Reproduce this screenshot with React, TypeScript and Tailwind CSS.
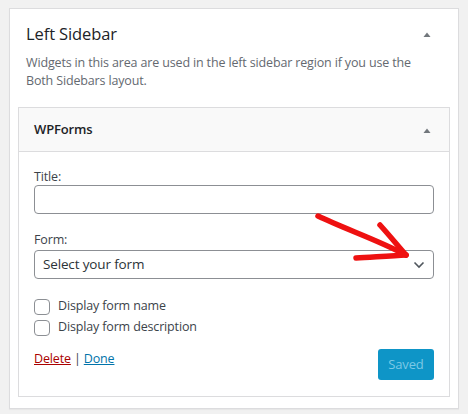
import React from 'react'

const font = { fontFamily: '"Open Sans", "Noto Sans", sans-serif' }

function Caret() {
  return (
    <svg width="10" height="6" viewBox="0 0 10 6" className="shrink-0">
      <path d="M1.5 6 L5 1.5 L8.5 6 Z" fill="#72777c" />
    </svg>
  )
}

function Checkbox({ label }: { label: string }) {
  return (
    <label className="flex h-[21px] items-center gap-[8px]">
      <span className="h-[16px] w-[16px] rounded-[4px] border border-[#8c8f94] bg-white" />
      <span className="text-[12.5px] tracking-[-0.15px] text-[#3c434a]">{label}</span>
    </label>
  )
}

export default function App() {
  return (
    <div className="relative min-h-[414px] w-[468px] bg-[#f1f1f1] pt-[8px] pl-[9px]" style={font}>
      <div className="w-[450px] border border-[#dcdcde] bg-white pb-[11px] shadow-[0_1px_1px_rgba(0,0,0,0.04)]">
        <div className="flex items-center justify-between pl-[16px] pr-[26px] pt-[13px]">
          <h2 className="text-[16.5px] leading-[24px] tracking-[-0.1px] text-[#1d2327]">Left Sidebar</h2>
          <Caret />
        </div>
        <p className="mt-[8px] px-[16px] text-[12.5px] leading-[18px] tracking-[-0.15px] text-[#646970]">
          Widgets in this area are used in the left sidebar region if you use the
          <br />
          Both Sidebars layout.
        </p>

        <div className="mx-[8px] mt-[17px] border border-[#dcdcde]">
          <div className="flex h-[44px] items-center justify-between border-b border-[#dcdcde] bg-[#f9f9f9] pl-[15px] pr-[17px]">
            <span className="text-[13px] font-semibold tracking-[-0.15px] text-[#1d2327]">WPForms</span>
            <Caret />
          </div>

          <div className="px-[15px] pt-[16px] pb-[16px] text-[12.5px] tracking-[-0.15px] text-[#3c434a]">
            <div className="leading-[18px]">Title:</div>
            <div className="mt-[-1px] h-[29px] w-full rounded-[4px] border border-[#8c8f94] bg-white" />

            <div className="mt-[17px] leading-[18px]">Form:</div>
            <div className="mt-[1px] flex h-[29px] w-full items-center justify-between rounded-[4px] border border-[#8c8f94] bg-white pl-[8px] pr-[8px]">
              <span className="text-[13.5px] text-[#2c3338]">Select your form</span>
              <svg width="12" height="8" viewBox="0 0 12 8">
                <path d="M1.5 1.5 L6 6 L10.5 1.5" fill="none" stroke="#50575e" strokeWidth="1.6" />
              </svg>
            </div>

            <div className="mt-[17px] flex flex-col">
              <Checkbox label="Display form name" />
              <Checkbox label="Display form description" />
            </div>

            <div className="mt-[11px] flex items-start justify-between">
              <div className="mt-[1px]">
                <a href="#" className="text-[#a00] underline">Delete</a>
                <span className="text-[#3c434a]"> | </span>
                <a href="#" className="text-[#0073aa] underline">Done</a>
              </div>
              <button className="mt-[0px] h-[31px] w-[56px] rounded-[3px] bg-[#0e95c7] text-[13px] text-[#7cc9e6]">
                Saved
              </button>
            </div>
          </div>
        </div>
      </div>

      <svg
        className="pointer-events-none absolute left-0 top-0"
        width="468"
        height="414"
        viewBox="0 0 468 414"
      >
        <g fill="none" stroke="#ee1111" strokeWidth="5.5" strokeLinecap="round" strokeLinejoin="round">
          <path d="M318 216 C 345 229, 378 240, 406 255" />
          <path d="M380 225 C 390 236, 398 246, 406 255" />
          <path d="M356 258 C 372 257, 392 256, 406 255" />
        </g>
      </svg>
    </div>
  )
}
